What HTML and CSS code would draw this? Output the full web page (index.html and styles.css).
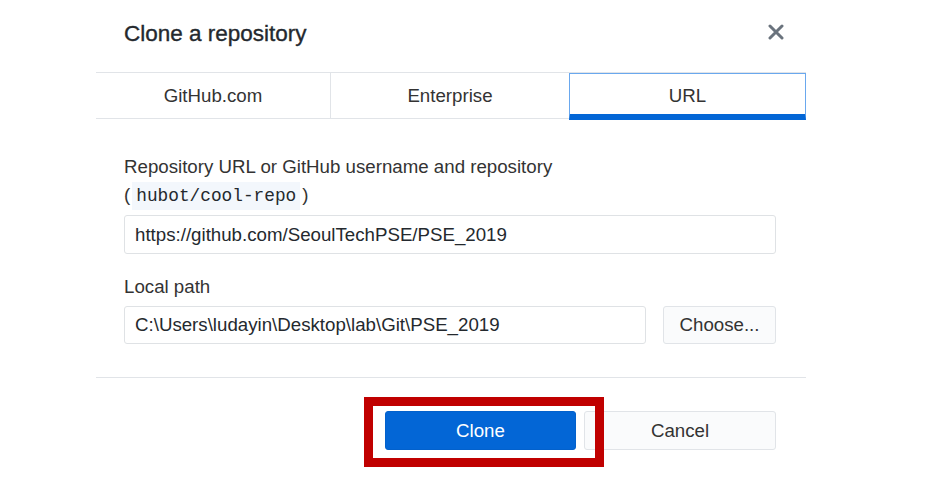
FILE: index.html
```html
<!DOCTYPE html>
<html>
<head>
<meta charset="utf-8">
<link rel="stylesheet" href="styles.css">
</head>
<body>
<div class="dialog">
  <div class="header">
    <h1 class="title">Clone a repository</h1>
    <button class="close" aria-label="Close">
      <svg width="16" height="16" viewBox="0 0 16 16"><path d="M2 2 L14 14 M14 2 L2 14" stroke="#6a737d" stroke-width="3" stroke-linecap="round"/></svg>
    </button>
  </div>
  <div class="tabs">
    <div class="tab">GitHub.com</div>
    <div class="tab">Enterprise</div>
    <div class="tab selected">URL</div>
  </div>
  <div class="content">
    <div class="label">Repository URL or GitHub username and repository<br>(<code class="code">hubot/cool-repo</code>)</div>
    <div class="input">https://github.com/SeoulTechPSE/PSE_2019</div>
    <div class="label second">Local path</div>
    <div class="row">
      <div class="input grow">C:\Users\ludayin\Desktop\lab\Git\PSE_2019</div>
      <button class="btn choose">Choose...</button>
    </div>
  </div>
  <div class="footer">
    <div class="highlight">
      <button class="btn primary">Clone</button>
      <span class="mark"></span>
    </div>
    <button class="btn secondary">Cancel</button>
  </div>
</div>
</body>
</html>
```

FILE: styles.css
```css
* { box-sizing: border-box; }
html, body { margin: 0; padding: 0; background: #fff; }
body {
  font-family: "Liberation Sans", Arial, sans-serif;
  color: #333;
}
.dialog {
  width: 710px;
  margin-left: 96px;
}
.header {
  height: 72px;
  display: flex;
  align-items: center;
  justify-content: space-between;
  padding: 0 22px 4px 28px;
}
.title {
  margin: 0;
  font-size: 22.5px;
  font-weight: 400;
  color: #24292e;
  -webkit-text-stroke: 0.35px #24292e;
}
.close {
  border: 0;
  background: transparent;
  padding: 0;
  width: 16px;
  height: 16px;
  display: flex;
  align-items: center;
  justify-content: center;
  margin-top: -4px;
}
.tabs {
  display: grid;
  grid-template-columns: 234px 239px 237px;
  border-top: 1px solid #e1e4e8;
  border-bottom: 1px solid #e1e4e8;
  height: 47px;
}
.tab {
  display: flex;
  align-items: center;
  justify-content: center;
  font-size: 18.7px;
  color: #333;
  border-left: 1px solid #e1e4e8;
}
.tab:first-child { border-left: 0; }
.tab.selected {
  border: 1px solid #6aa8ee;
  border-bottom: 6px solid #0366d6;
  margin-bottom: -2px;
  padding-top: 3px;
  background: #fff;
}
.content {
  padding: 34px 30px 33px 28px;
  border-bottom: 1px solid #e1e4e8;
}
.label {
  font-size: 18.7px;
  line-height: 28px;
  color: #333;
}
.label.second { margin-top: 19px; }
.code {
  font-family: "Liberation Mono", monospace;
  font-size: 17.8px;
  background: #f3f7fc;
  padding: 4px 4px 4px 4px;
  margin: 0 2px;
  color: #24292e;
}
.input {
  margin-top: 5px;
  height: 39px;
  border: 1px solid #dfe2e5;
  border-radius: 3px;
  padding: 0 10px;
  display: flex;
  align-items: center;
  font-size: 18.7px;
  color: #24292e;
  background: #fff;
}
.row {
  display: flex;
  gap: 17px;
  align-items: flex-end;
}
.row .input { height: 38px; }
.grow { flex: 1; }
.btn {
  font-family: "Liberation Sans", Arial, sans-serif;
  font-size: 18.7px;
  border-radius: 3px;
  height: 39px;
  cursor: default;
  padding: 0;
}
.choose {
  width: 113px;
  height: 38px;
  background: #fafbfc;
  border: 1px solid #e1e4e8;
  color: #333;
}
.footer {
  display: flex;
  justify-content: flex-end;
  align-items: flex-start;
  gap: 8px;
  padding: 33px 30px 38px 0;
}
.highlight {
  position: relative;
  display: flex;
}
.primary {
  width: 191px;
  background: #0366d6;
  border: 1px solid #0361cc;
  color: #fff;
}
.secondary {
  width: 192px;
  background: #fafbfc;
  border: 1px solid #e1e4e8;
  color: #333;
}
.mark {
  position: absolute;
  left: -21px;
  top: -14px;
  right: -28px;
  bottom: -17px;
  border: 9px solid #c00000;
  pointer-events: none;
}
```
